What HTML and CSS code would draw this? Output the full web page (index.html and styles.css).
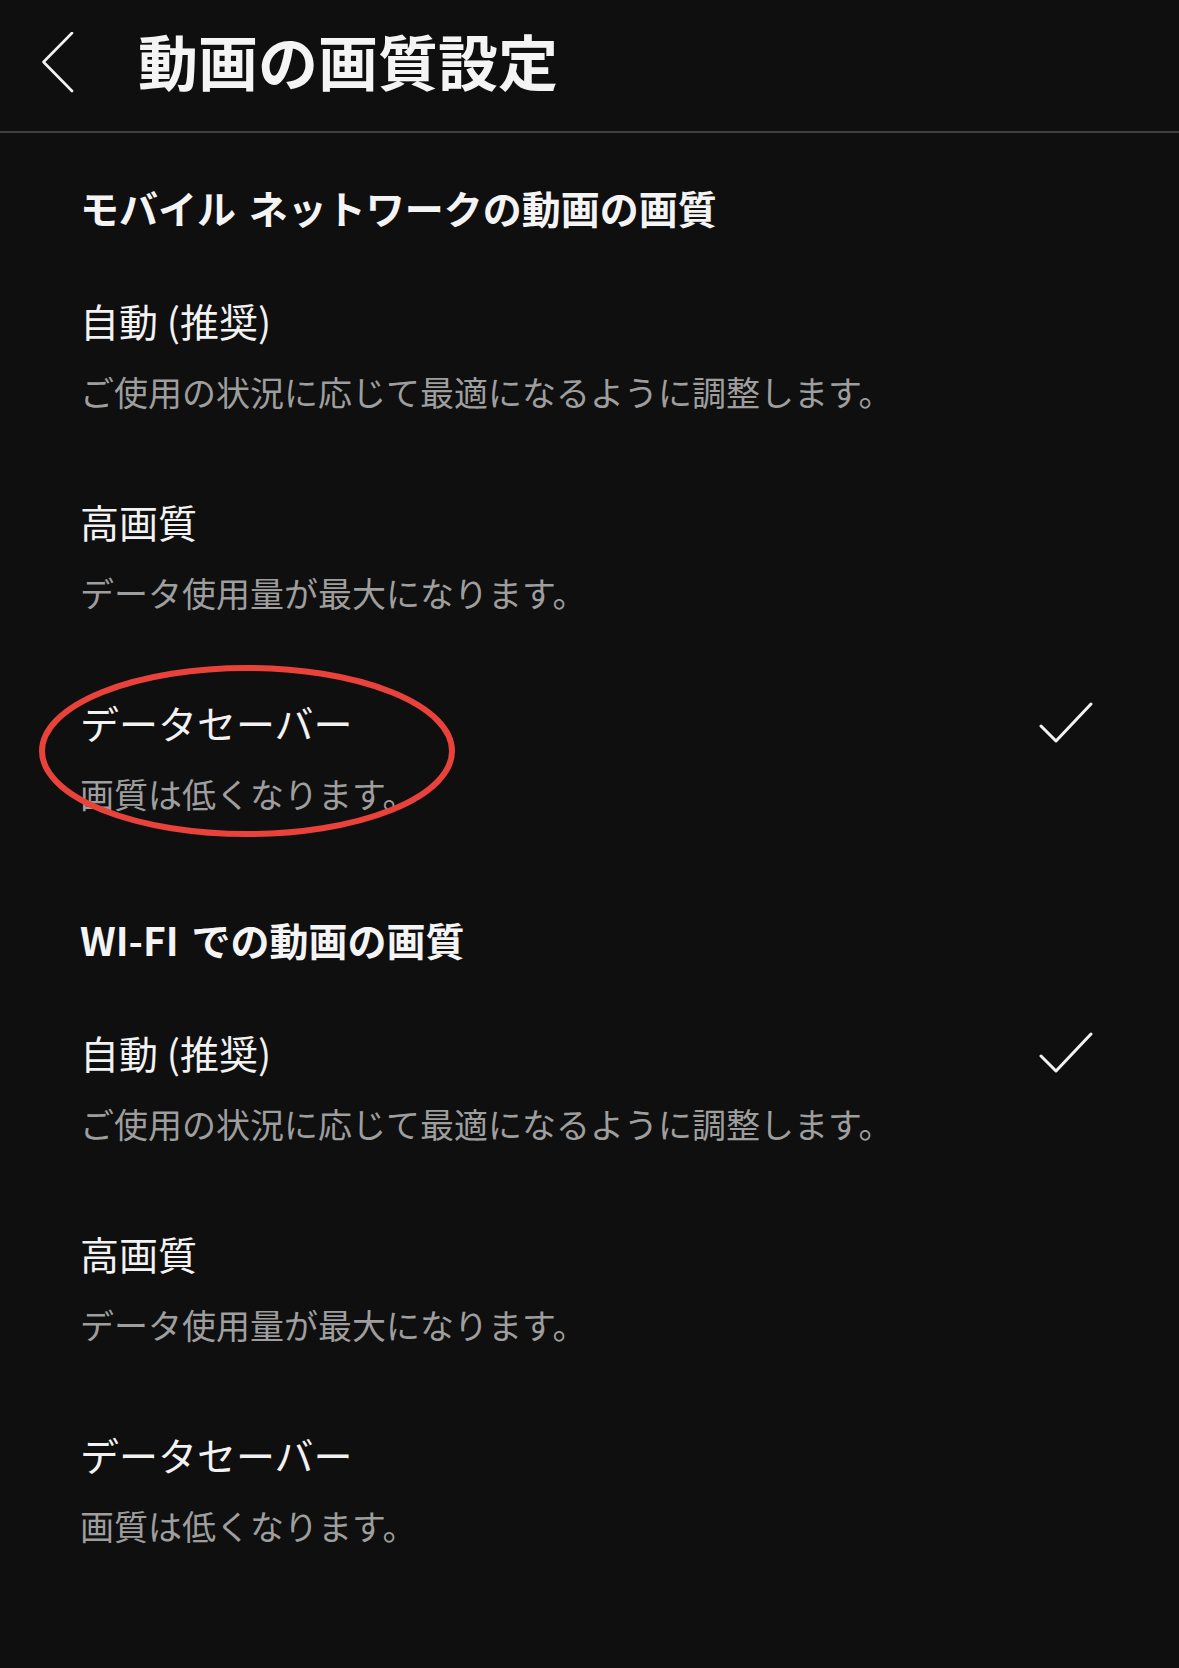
FILE: index.html
```html
<!DOCTYPE html>
<html lang="ja">
<head>
  <meta charset="UTF-8" />
  <meta name="viewport" content="width=device-width, initial-scale=1.0">
  <title>動画の画質設定</title>
  <link rel="stylesheet" href="styles.css">
</head>
<body>

<div class="screen">
  <header class="topbar">
    <svg class="back" viewBox="0 0 32 62" width="32" height="62">
      <polyline points="30,1 1.5,30 30,59" />
    </svg>
    <h1>動画の画質設定</h1>
  </header>

  <section class="group">
    <h2>モバイル ネットワークの動画の画質</h2>

    <div class="option">
      <div class="option-head"><span class="option-title">自動 (推奨)</span></div>
      <div class="option-desc">ご使用の状況に応じて最適になるように調整します。</div>
    </div>

    <div class="option">
      <div class="option-head"><span class="option-title">高画質</span></div>
      <div class="option-desc">データ使用量が最大になります。</div>
    </div>

    <div class="option">
      <div class="option-head">
        <span class="option-title">データセーバー</span>
        <svg class="check" viewBox="0 0 54 43" width="54" height="43"><polyline points="2,25 17,40 52,3" /></svg>
      </div>
      <div class="option-desc">画質は低くなります。</div>
    </div>
  </section>

  <section class="group second">
    <h2>WI-FI での動画の画質</h2>

    <div class="option">
      <div class="option-head">
        <span class="option-title">自動 (推奨)</span>
        <svg class="check" viewBox="0 0 54 43" width="54" height="43"><polyline points="2,25 17,40 52,3" /></svg>
      </div>
      <div class="option-desc">ご使用の状況に応じて最適になるように調整します。</div>
    </div>

    <div class="option">
      <div class="option-head"><span class="option-title">高画質</span></div>
      <div class="option-desc">データ使用量が最大になります。</div>
    </div>

    <div class="option">
      <div class="option-head"><span class="option-title">データセーバー</span></div>
      <div class="option-desc">画質は低くなります。</div>
    </div>
  </section>

  <!-- red circle drawn over the screenshot -->
  <svg class="mark" viewBox="0 0 430 182" width="430" height="182">
    <ellipse cx="215" cy="91" rx="205" ry="83" />
  </svg>
</div>

</body>
</html>
```

FILE: styles.css
```css
* { margin: 0; padding: 0; box-sizing: border-box; }
html, body {
  height: 100%;
  overflow: hidden;
  background: #0f0f0f;
  font-family: "Noto Sans CJK JP", "Noto Sans", sans-serif;
  color: #f2f2f2;
}

.screen {
  position: relative;
  width: 1179px;
  height: 1668px;
  background: #0f0f0f;
}

.topbar {
  display: flex;
  align-items: center;
  height: 133px;
  padding-left: 42px;
  padding-bottom: 6px;
  border-bottom: 2px solid #3e3e3e;
}

.back {
  fill: none;
  stroke: #f2f2f2;
  stroke-width: 2.6;
  stroke-linecap: round;
  stroke-linejoin: round;
}

.topbar h1 {
  margin-left: 64px;
  margin-bottom: 6px;
  font-size: 60px;
  font-weight: 700;
  line-height: 1;
  color: #f4f4f4;
}

.group {
  padding-top: 50px;
}
.group.second {
  padding-top: 56px;
}

.group h2 {
  padding-left: 80px;
  padding-bottom: 25px;
  font-size: 39px;
  font-weight: 700;
  line-height: 48px;
  word-spacing: 4px;
  color: #f4f4f4;
}

.option {
  padding: 40px 86px 41px 80px;
}

.option-head {
  display: flex;
  justify-content: space-between;
  align-items: center;
  height: 48px;
}

.option-title {
  font-size: 39px;
  line-height: 48px;
  color: #f2f2f2;
}

.option-desc {
  margin-top: 24px;
  font-size: 34px;
  line-height: 48px;
  color: #9e9e9e;
}

.check {
  fill: none;
  stroke: #f2f2f2;
  stroke-width: 3;
  stroke-linecap: round;
  stroke-linejoin: round;
}

.mark {
  position: absolute;
  left: 32px;
  top: 660px;
  fill: none;
  stroke: #e8423b;
  stroke-width: 6;
}
```
